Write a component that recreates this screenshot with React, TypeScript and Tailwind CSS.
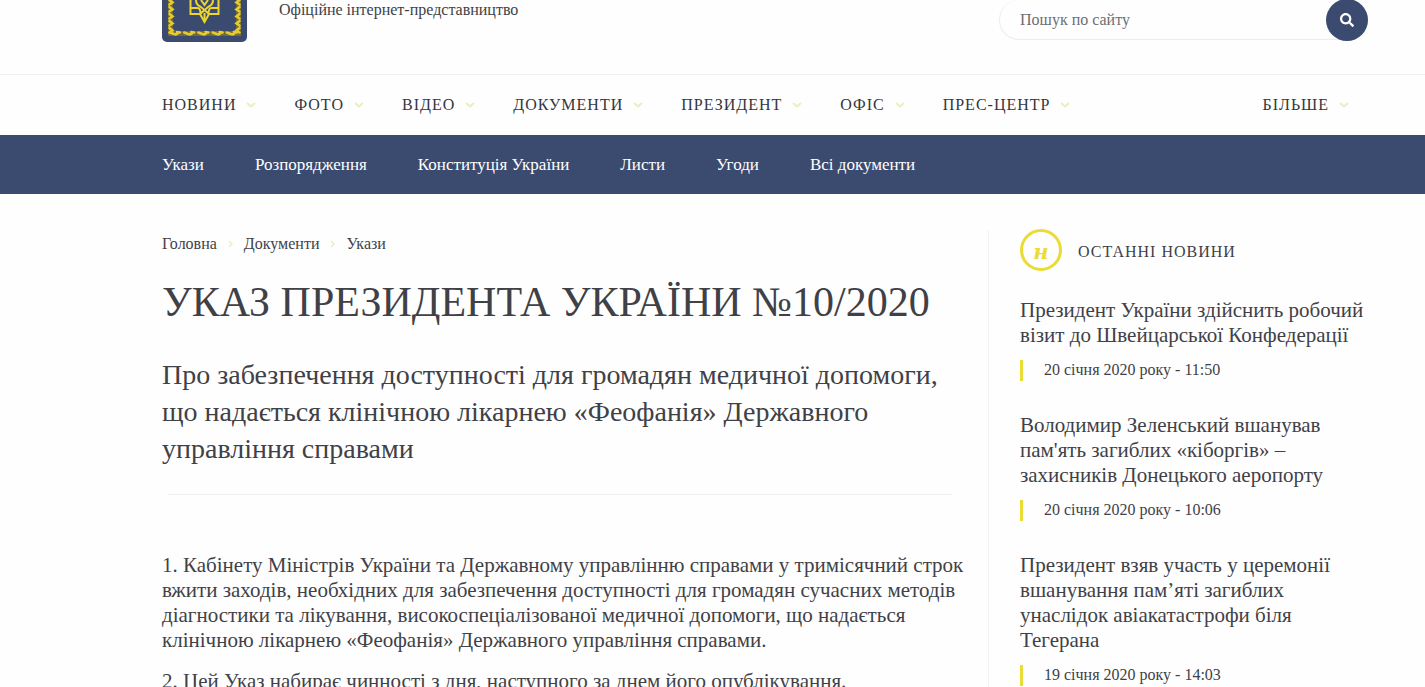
import { FaSearch } from "react-icons/fa";

const menu = ["НОВИНИ", "ФОТО", "ВІДЕО", "ДОКУМЕНТИ", "ПРЕЗИДЕНТ", "ОФІС", "ПРЕС-ЦЕНТР"];

const sections = ["Укази", "Розпорядження", "Конституція України", "Листи", "Угоди", "Всі документи"];

const news = [
  {
    title: "Президент України здійснить робочий візит до Швейцарської Конфедерації",
    date: "20 січня 2020 року - 11:50",
  },
  {
    title: "Володимир Зеленський вшанував пам'ять загиблих «кіборгів» – захисників Донецького аеропорту",
    date: "20 січня 2020 року - 10:06",
  },
  {
    title: "Президент взяв участь у церемонії вшанування пам’яті загиблих унаслідок авіакатастрофи біля Тегерана",
    date: "19 січня 2020 року - 14:03",
  },
];

function Emblem() {
  return (
    <svg viewBox="0 0 85 42" className="w-[85px] h-[42px] shrink-0" aria-hidden="true">
      <path d="M0 0h85v37a5 5 0 0 1-5 5H5a5 5 0 0 1-5-5z" fill="#3b4a6f" />
      <path d="M8.500 0v33.500h68V0" fill="none" stroke="#6e6a3c" strokeWidth="5" />
      {/* braid around the field */}
      <g fill="none" stroke="#e6cb30" strokeWidth="2.6" strokeLinecap="round">
        {[0, 1, 2, 3, 4].map((i) => (
          <path key={i} d={`M${8 + i * 14.2} 32.500l4 1.500q3 1 4-1M${15 + i * 14.2} 32l3 .5`} />
        ))}
        {[0, 1, 2, 3, 4].map((i) => (
          <path key={i} d={`M7.500 ${i * 7}l3 2.500-3 2M77.500 ${i * 7}l-3 2.500 3 2`} />
        ))}
      </g>
      <g fill="none" stroke="#edd52b" strokeWidth="2">
        <path d="M28.500 0v14H38l4.500 8 4.500-8h9.500V0" />
        <path d="M42.500 13v9M34 0q0 5 5 7l8 7M51 0q0 5-5 7l-8 7M28.500 8h7q3 0 3 6M56.500 8h-7q-3 0-3 6M39 0l3.500 5L46 0" />
      </g>
    </svg>
  );
}

function Chevron() {
  return (
    <svg viewBox="0 0 10 6" className="w-[10px] h-[6px]" fill="none" stroke="#eeecc0" strokeWidth="2" aria-hidden="true">
      <path d="M1 1l4 3.500L9 1" />
    </svg>
  );
}

function Separator() {
  return (
    <svg viewBox="0 0 5 8" className="w-[5px] h-2" fill="none" stroke="#efecc0" strokeWidth="1.500" aria-hidden="true">
      <path d="M1 1l3 3-3 3" />
    </svg>
  );
}

function MenuLink({ label }: { label: string }) {
  return (
    <a href="#" className="flex items-center gap-[10px] tracking-[1px]">
      {label}
      <Chevron />
    </a>
  );
}

export default function App() {
  return (
    <div className="min-h-screen bg-[#fefefe] text-[#3f4147] font-['Georgia','Liberation_Serif',serif]">
      <header>
        <div className="h-[75px] flex items-start justify-between pl-[162px] pr-[57px] border-b border-[#f1f1f3]">
          <div className="flex items-start gap-8">
            <a href="#" aria-label="Головна">
              <Emblem />
            </a>
            <p className="text-base leading-5">Офіційне інтернет-представництво</p>
          </div>
          <form className="flex w-[369px] h-10 rounded-full border border-t-0 border-[#ececef]">
            <input
              type="text"
              aria-label="Пошук по сайту"
              placeholder="Пошук по сайту"
              className="flex-1 min-w-0 pl-5 text-base leading-5 bg-transparent outline-none placeholder:text-[#6c6e73]"
            />
            <button
              type="button"
              aria-label="Пошук"
              className="-mt-px -mr-px w-[42px] h-[42px] shrink-0 rounded-full bg-[#3b4a6f] text-white flex items-center justify-center"
            >
              <FaSearch className="w-[14px] h-[14px]" />
            </button>
          </form>
        </div>

        <nav className="h-[60px] flex items-center justify-between pl-[162px] pr-[76px] text-base text-[#34363c]">
          <div className="flex gap-[38px]">
            {menu.map((label) => (
              <MenuLink key={label} label={label} />
            ))}
          </div>
          <MenuLink label="БІЛЬШЕ" />
        </nav>

        <nav className="h-[59px] flex items-center gap-[51px] pl-[162px] bg-[#3b4a6f] text-white text-[17px]">
          {sections.map((label) => (
            <a key={label} href="#">
              {label}
            </a>
          ))}
        </nav>
      </header>

      <div className="flex pl-[162px] pr-[57px] pt-9">
        <main className="flex-1 min-w-0 pr-8">
          <div className="flex items-center gap-[11px] pt-1 text-base leading-5">
            <a href="#">Головна</a>
            <Separator />
            <a href="#">Документи</a>
            <Separator />
            <a href="#">Укази</a>
          </div>
          <h1 className="mt-6 text-[42px] leading-[48px] whitespace-nowrap">УКАЗ ПРЕЗИДЕНТА УКРАЇНИ №10/2020</h1>
          <p className="mt-[30px] text-[28px] leading-[37px]">
            Про забезпечення доступності для громадян медичної допомоги,
            <br />
            що надається клінічною лікарнею «Феофанія» Державного
            <br />
            управління справами
          </p>
          <hr className="mt-[27px] ml-[6px] mr-1 border-[#ededf2]" />
          <div className="mt-[58px] text-[21px] leading-[25px] whitespace-nowrap">
            <p>
              1. Кабінету Міністрів України та Державному управлінню справами у тримісячний строк
              <br />
              вжити заходів, необхідних для забезпечення доступності для громадян сучасних методів
              <br />
              діагностики та лікування, високоспеціалізованої медичної допомоги, що надається
              <br />
              клінічною лікарнею «Феофанія» Державного управління справами.
            </p>
            <p className="mt-4">2. Цей Указ набирає чинності з дня, наступного за днем його опублікування.</p>
          </div>
        </main>

        <aside className="w-[380px] shrink-0 border-l border-[#f1f1f3] pl-[31px]">
          <div className="flex items-center gap-4 -mt-px">
            <span className="w-[42px] h-[42px] rounded-full border-[3px] border-[#eadb35] flex items-center justify-center pt-1 text-[21px] leading-6 font-bold italic font-['DejaVu_Serif',serif] text-[#eadb35]">
              н
            </span>
            <h2 className="pt-1 text-base tracking-[1px]">ОСТАННІ НОВИНИ</h2>
          </div>
          <div className="mt-[27px] flex flex-col gap-8">
            {news.map((item) => (
              <article key={item.date}>
                <a href="#" className="block pr-1 text-[21px] leading-[25px]">
                  {item.title}
                </a>
                <p className="mt-3 h-[21px] border-l-[3px] border-[#eadb35] pl-[21px] text-base leading-5">
                  {item.date}
                </p>
              </article>
            ))}
          </div>
        </aside>
      </div>
    </div>
  );
}
